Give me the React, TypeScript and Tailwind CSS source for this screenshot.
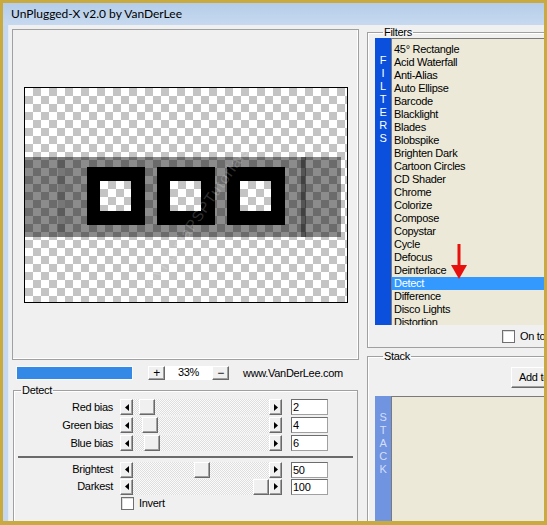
import React from 'react'

const filters = [
  '45° Rectangle',
  'Acid Waterfall',
  'Anti-Alias',
  'Auto Ellipse',
  'Barcode',
  'Blacklight',
  'Blades',
  'Blobspike',
  'Brighten Dark',
  'Cartoon Circles',
  'CD Shader',
  'Chrome',
  'Colorize',
  'Compose',
  'Copystar',
  'Cycle',
  'Defocus',
  'Deinterlace',
  'Detect',
  'Difference',
  'Disco Lights',
  'Distortion',
]

const biasRows = [
  { label: 'Red bias', value: '2', pos: 6 },
  { label: 'Green bias', value: '4', pos: 9 },
  { label: 'Blue bias', value: '6', pos: 11 },
]

const levelRows = [
  { label: 'Brightest', value: '50', pos: 61 },
  { label: 'Darkest', value: '100', pos: 120 },
]

const checker =
  'bg-[repeating-conic-gradient(#c4c4c4_0%_25%,#ffffff_0%_50%)] bg-[length:16px_16px]'

const raised =
  'border border-t-white border-l-white border-r-[#696969] border-b-[#696969] bg-[#f0f0f0] shadow-[inset_-1px_-1px_0_#a0a0a0]'

function ArrowButton({ dir }: { dir: 'left' | 'right' }) {
  return (
    <div className={`flex h-[16px] w-[13px] shrink-0 items-center justify-center ${raised}`}>
      <svg width="4" height="7" viewBox="0 0 4 7">
        {dir === 'left' ? <path d="M4 0 L0 3.5 L4 7 Z" fill="#000" /> : <path d="M0 0 L4 3.5 L0 7 Z" fill="#000" />}
      </svg>
    </div>
  )
}

function SliderRow({ label, value, pos, h }: { label: string; value: string; pos: number; h: string }) {
  return (
    <div className={`flex shrink-0 items-center ${h}`}>
      <div className="w-[99px] text-right">{label}</div>
      <div className="ml-[7px] flex w-[162px]">
        <ArrowButton dir="left" />
        <div className="flex h-[16px] flex-1 bg-[repeating-conic-gradient(#dedede_0%_25%,#fbfbfb_0%_50%)] bg-[length:2px_2px]">
          <div className={`h-[16px] w-[16px] shrink-0 ${raised}`} style={{ marginLeft: pos }} />
        </div>
        <ArrowButton dir="right" />
      </div>
      <div className="ml-[9px] h-[16px] w-[37px] border border-t-[#6d6d6d] border-l-[#6d6d6d] border-r-[#a0a0a0] border-b-[#a0a0a0] bg-white pl-[1px] leading-[14px]">
        {value}
      </div>
    </div>
  )
}

function Checkbox() {
  return <div className="h-[13px] w-[13px] shrink-0 border border-[#707070] bg-white shadow-[inset_1px_1px_0_#dcdcdc]" />
}

function Preview() {
  return (
    <div className="flex h-[331px] w-[347px] shrink-0 items-center justify-center border border-[#a0a0a0] shadow-[inset_-1px_-1px_0_#ffffff]">
      <div className={`relative h-[216px] w-[324px] overflow-hidden border border-black ${checker}`}>
        <div className="mt-[69px] flex h-[80px] w-[316px] bg-black/45">
          <div className="w-[33px]" />
          <div className="w-[7px] bg-black/15" />
          <div className="w-[22px]" />
          {[0, 1, 2].map((i) => (
            <div
              key={i}
              className={`mt-[10px] flex h-[58px] w-[58px] items-center justify-center bg-black ${i < 2 ? 'mr-[12px]' : ''}`}
            >
              <div className={`h-[30px] w-[31px] ${checker}`} />
            </div>
          ))}
          <div className="w-[16px]" />
          <div className="w-[5px] bg-black/40" />
        </div>
        <div className="absolute left-[88px] top-[118px] -rotate-[55deg] text-[15px] tracking-[1px] text-white/20">
          ©VirginiaPSPTutorials
        </div>
      </div>
    </div>
  )
}

function Controls() {
  return (
    <div className="mt-[6px] flex h-[14px] shrink-0 items-center">
      <div className="ml-[4px] h-[14px] w-[117px] border border-[#f8f8f8] bg-[#3489e6]" />
      <div className="ml-[15px] flex h-[14px] items-center">
        <div className={`flex h-[14px] w-[17px] items-center justify-center text-[12px] leading-none ${raised}`}>+</div>
        <div className="h-[14px] w-[47px] bg-white text-center leading-[13px]">33%</div>
        <div className={`flex h-[14px] w-[17px] items-center justify-center text-[12px] leading-none ${raised}`}>−</div>
      </div>
      <div className="ml-[14px]">www.VanDerLee.com</div>
    </div>
  )
}

function DetectGroup() {
  return (
    <fieldset className="ml-[1px] mt-[4px] h-[200px] w-[345px] shrink-0 border border-[#a0a0a0] shadow-[inset_1px_1px_0_#ffffff]">
      <legend className="ml-[7px] px-[1px] leading-[13px]">Detect</legend>
      <div className="pt-[1px]">
        {biasRows.map((r) => (
          <SliderRow key={r.label} {...r} h="h-[18px]" />
        ))}
      </div>
      <div className="mx-[4px] mt-[4px] h-[2px] bg-[#6a6a6a]" />
      <div className="mt-[3px]">
        {levelRows.map((r) => (
          <SliderRow key={r.label} {...r} h="h-[17px]" />
        ))}
      </div>
      <div className="flex h-[17px] items-center pl-[107px]">
        <Checkbox />
        <span className="ml-[5px]">Invert</span>
      </div>
    </fieldset>
  )
}

function FiltersGroup() {
  return (
    <fieldset className="mt-[1px] w-[200px] shrink-0 border border-[#a0a0a0] pb-[5px] pl-[7px] shadow-[inset_1px_1px_0_#ffffff]">
      <legend className="ml-[8px] px-[1px] leading-[13px]">Filters</legend>
      <div className="-mt-[1px] flex h-[287px]">
        <div className="flex w-[16px] shrink-0 flex-col items-center bg-[#0a50dc] pt-[16px] leading-[13px] text-white">
          {'FILTERS'.split('').map((c, i) => (
            <span key={i}>{c}</span>
          ))}
        </div>
        <div className="relative flex-1 overflow-hidden border-l border-t border-[#7a7a7a] bg-[#ece9d8] pt-[4px]">
          {filters.map((f) => (
            <div
              key={f}
              className={`h-[13px] whitespace-nowrap pl-[2px] leading-[13px] ${f === 'Detect' ? 'bg-[#3399ff] text-white' : ''}`}
            >
              {f}
            </div>
          ))}
          <svg className="absolute left-[59px] top-[205px]" width="16" height="35" viewBox="0 0 16 35">
            <rect x="6.5" y="0" width="3" height="24" fill="#e8100c" />
            <path d="M0 21 L16 21 L8 35 Z" fill="#e8100c" />
          </svg>
        </div>
      </div>
      <div className="ml-[127px] mt-[5px] flex h-[12px] items-center">
        <Checkbox />
        <span className="ml-[5px] whitespace-nowrap">On top</span>
      </div>
    </fieldset>
  )
}

function StackGroup() {
  return (
    <fieldset className="mt-[2px] w-[200px] shrink-0 border border-[#a0a0a0] pl-[7px] shadow-[inset_1px_1px_0_#ffffff]">
      <legend className="ml-[8px] px-[1px] leading-[13px]">Stack</legend>
      <div className={`ml-[136px] mt-[4px] flex h-[21px] w-[80px] items-center whitespace-nowrap pl-[7px] ${raised}`}>
        Add to stack
      </div>
      <div className="mt-[8px] flex h-[160px]">
        <div className="flex w-[16px] shrink-0 flex-col items-center bg-[#7094e0] pt-[15px] leading-[13px] text-[#d4defa]">
          {'STACK'.split('').map((c, i) => (
            <span key={i}>{c}</span>
          ))}
        </div>
        <div className="flex-1 border-l border-t border-[#7a7a7a] bg-[#ece9d8]" />
      </div>
    </fieldset>
  )
}

export default function App() {
  return (
    <div className="flex h-[525px] w-[547px] flex-col overflow-hidden border-[#c9aa3e] border-b-[4px] border-l-[3px] border-r-[3px] border-t-[3px] font-['Liberation_Sans',Arial,sans-serif] text-[11px] tracking-[-0.3px] text-black">
      <div className="flex h-[22px] shrink-0 items-center bg-gradient-to-b from-[#b5cdea] to-[#c6d9ef] pl-[8px] font-['Lato',sans-serif] text-[12px] tracking-normal text-black">
        UnPlugged-X v2.0 by VanDerLee
      </div>
      <div className="flex flex-1 overflow-hidden">
        <div className="w-[6px] shrink-0 border-r border-[#e4ecf7] bg-[#c5d8ef]" />
        <div className="flex flex-1 items-start overflow-hidden bg-[#f0f0f0]">
          <div className="flex w-[350px] shrink-0 flex-col pl-[3px] pt-[4px]">
            <Preview />
            <Controls />
            <DetectGroup />
          </div>
          <div className="ml-[8px] flex shrink-0 flex-col">
            <FiltersGroup />
            <StackGroup />
          </div>
        </div>
      </div>
    </div>
  )
}
